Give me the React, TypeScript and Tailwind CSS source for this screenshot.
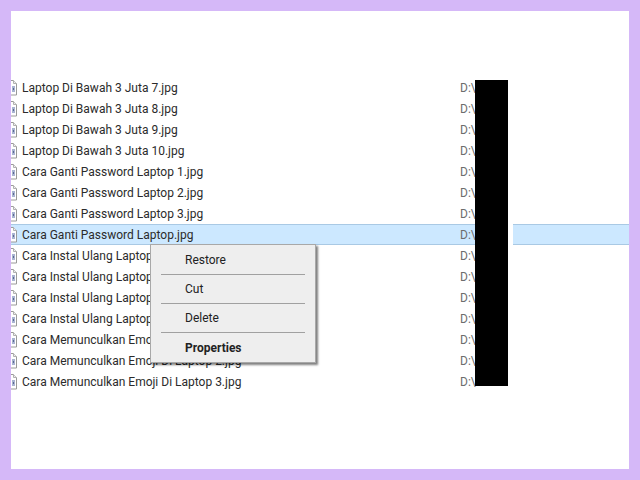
const files = [
  'Laptop Di Bawah 3 Juta 7.jpg',
  'Laptop Di Bawah 3 Juta 8.jpg',
  'Laptop Di Bawah 3 Juta 9.jpg',
  'Laptop Di Bawah 3 Juta 10.jpg',
  'Cara Ganti Password Laptop 1.jpg',
  'Cara Ganti Password Laptop 2.jpg',
  'Cara Ganti Password Laptop 3.jpg',
  'Cara Ganti Password Laptop.jpg',
  'Cara Instal Ulang Laptop 1.jpg',
  'Cara Instal Ulang Laptop 2.jpg',
  'Cara Instal Ulang Laptop 3.jpg',
  'Cara Instal Ulang Laptop 4.jpg',
  'Cara Memunculkan Emoji Di Laptop 1.jpg',
  'Cara Memunculkan Emoji Di Laptop 2.jpg',
  'Cara Memunculkan Emoji Di Laptop 3.jpg',
]

function FileIcon() {
  return (
    <svg width="6" height="16" viewBox="0 0 6 16" className="shrink-0">
      <path d="M0 .5h2.5l3 3v11.5H0" fill="#fff" stroke="#9a9a9a" />
      <path d="M2.5 .5v3h3" fill="#eee" stroke="#b0b0b0" />
      <rect x="1" y="6" width="3" height="6" fill="#a9b4d2" />
      <rect x="2" y="8" width="1" height="2" fill="#5a6a90" />
    </svg>
  )
}

export default function App() {
  return (
    <div className="w-[640px] h-[480px] bg-[#d5b8f8] p-[11px] font-['Roboto',sans-serif]">
      <div className="relative h-full bg-white pt-[66px] overflow-hidden">
        {files.map((name, i) => (
          <div
            key={name}
            className={`flex items-center h-[21px] text-[12px] ${
              i === 7 ? 'bg-[#cce8ff] shadow-[inset_0_1px_0_#a9c9e4,inset_0_-1px_0_#a9c9e4]' : ''
            }`}
          >
            <FileIcon />
            <span className="ml-[5px] w-[438px] pt-[1px] text-[#2b2b2b] whitespace-nowrap">{name}</span>
            <span className="pt-[1px] text-[#6d6d6d]">D:\</span>
          </div>
        ))}

        {/* redacted path column */}
        <div className="absolute left-[464px] top-[69px] w-[33px] h-[306px] bg-black" />
        <div className="absolute left-[497px] top-[213px] w-[5px] h-[22px] bg-white" />

        {/* context menu */}
        <div className="absolute left-[139px] top-[233px] w-[166px] h-[119px] bg-[#eeeeee] border border-[#a8a8a8] shadow-[2px_2px_2px_rgba(0,0,0,0.5)] px-[10px] pt-[1px] text-[12px] text-[#222]">
          <div className="h-[29px] flex items-center pl-[24px] border-b border-[#a0a0a0]">Restore</div>
          <div className="h-[29px] flex items-center pl-[24px] border-b border-[#a0a0a0]">Cut</div>
          <div className="h-[29px] flex items-center pl-[24px] border-b border-[#a0a0a0]">Delete</div>
          <div className="h-[29px] flex items-center pl-[24px] font-bold">Properties</div>
        </div>
      </div>
    </div>
  )
}
